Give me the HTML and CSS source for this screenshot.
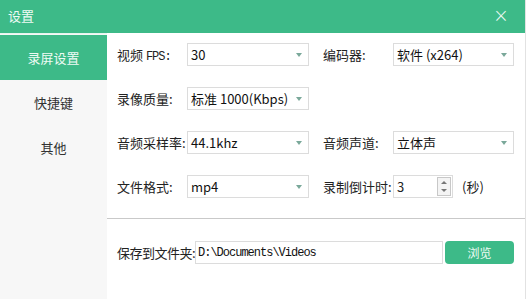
FILE: index.html
```html
<!DOCTYPE html>
<html lang="zh-CN">
<head>
<meta charset="utf-8">
<title>设置</title>
<link rel="stylesheet" href="styles.css">
</head>
<body>
<div class="window">
  <header class="titlebar">
    <span class="title">设置</span>
    <span class="close">×</span>
  </header>
  <div class="body">
    <nav class="sidebar">
      <div class="nav-item active">录屏设置</div>
      <div class="nav-item">快捷键</div>
      <div class="nav-item">其他</div>
    </nav>
    <main class="content">
      <div class="form">
        <label class="lbl">视频 <span class="mono">FPS:</span></label>
        <div class="select"><span>30</span><i class="arrow"></i></div>
        <label class="lbl lbl-r">编码器:</label>
        <div class="select"><span>软件 (x264)</span><i class="arrow"></i></div>

        <label class="lbl">录像质量:</label>
        <div class="select"><span>标准 1000(Kbps)</span><i class="arrow"></i></div>
        <span></span><span></span>

        <label class="lbl">音频采样率:</label>
        <div class="select"><span>44.1khz</span><i class="arrow"></i></div>
        <label class="lbl lbl-r">音频声道:</label>
        <div class="select"><span>立体声</span><i class="arrow"></i></div>

        <label class="lbl">文件格式:</label>
        <div class="select"><span>mp4</span><i class="arrow"></i></div>
        <label class="lbl lbl-r">录制倒计时:</label>
        <div class="countdown">
          <div class="spin">
            <span class="spin-val">3</span>
            <span class="spin-btns"><i class="up"></i><i class="down"></i></span>
          </div>
          <span class="unit">(秒)</span>
        </div>
      </div>
      <div class="save-row">
        <label class="lbl">保存到文件夹:</label>
        <div class="path mono">D:\Documents\Videos</div>
        <button class="browse">浏览</button>
      </div>
    </main>
  </div>
</div>
</body>
</html>
```
FILE: styles.css
```css
* { box-sizing: border-box; }
html, body { margin: 0; padding: 0; background: #fff; }
body {
  font-family: "Noto Sans CJK SC", "Noto Sans", sans-serif;
  font-size: 13px;
  color: #222;
}
.window {
  width: 526px;
  height: 299px;
  display: flex;
  flex-direction: column;
  border-right: 1px solid #e2e2e2;
}
.titlebar {
  height: 33px;
  background: #3dba88;
  display: flex;
  align-items: center;
  justify-content: space-between;
  padding: 0 16px 2px 8px;
  color: #eefaf4;
  flex: none;
}
.title { font-size: 13px; }
.close { font-family: "DejaVu Sans", sans-serif; font-size: 19px; font-weight: 300; line-height: 1; }
.body { flex: 1; display: flex; min-height: 0; }
.sidebar {
  width: 107px;
  background: #f7f7f7;
  padding-top: 1px;
  border-top: 1px solid #e6f5ee;
  flex: none;
}
.nav-item {
  height: 45px;
  display: flex;
  align-items: center;
  justify-content: center;
  color: #333;
  font-size: 13px;
}
.nav-item.active { background: #3dba88; color: #eefaf4; }
.content { flex: 1; padding-top: 10px; }
.form {
  display: grid;
  grid-template-columns: 70px 122px 84px 121px;
  grid-auto-rows: 23px;
  row-gap: 21px;
  column-gap: 0;
  padding: 0 0 20px 10px;
  align-items: center;
  border-bottom: 1px solid #c9c9c9;
}
.lbl { white-space: nowrap; color: #222; }
.lbl-r { padding-left: 14px; }
.mono {
  font-family: "Liberation Mono", "DejaVu Sans Mono", monospace;
  font-size: 12px;
  letter-spacing: -1px;
}
.select {
  height: 23px;
  border: 1px solid #dcdcdc;
  display: flex;
  align-items: center;
  justify-content: space-between;
  padding: 0 6px 0 3px;
  background: #fff;
  color: #111;
}
.arrow {
  width: 0; height: 0;
  border-left: 3.5px solid transparent;
  border-right: 3.5px solid transparent;
  border-top: 4px solid #7aa89a;
}
.countdown { display: flex; align-items: center; height: 23px; }
.spin {
  width: 60px;
  height: 23px;
  border: 1px solid #dcdcdc;
  display: flex;
  align-items: center;
  justify-content: space-between;
  padding: 0 0 0 3px;
}
.spin-btns {
  width: 14px;
  height: 19px;
  margin-right: 1px;
  border: 1px solid #c8c8c8;
  display: flex;
  flex-direction: column;
  align-items: center;
  justify-content: space-around;
  background: #f4f4f4;
}
.spin-btns .up, .spin-btns .down {
  width: 0; height: 0;
  border-left: 3px solid transparent;
  border-right: 3px solid transparent;
}
.spin-btns .up { border-bottom: 3px solid #777; }
.spin-btns .down { border-top: 3px solid #777; }
.unit { margin-left: 9px; }
.save-row {
  display: flex;
  align-items: center;
  padding: 22px 0 0 10px;
}
.save-row .lbl { width: 78px; letter-spacing: -0.5px; }
.path {
  width: 248px;
  height: 23px;
  border: 1px solid #dcdcdc;
  display: flex;
  align-items: center;
  padding-left: 2px;
  color: #111;
}
.browse {
  margin-left: 2px;
  width: 69px;
  height: 23px;
  border: none;
  border-radius: 4px;
  background: #3dba88;
  color: #eefaf4;
  font-family: "Noto Sans CJK SC", sans-serif;
  font-size: 12px;
  padding: 0;
}
```
